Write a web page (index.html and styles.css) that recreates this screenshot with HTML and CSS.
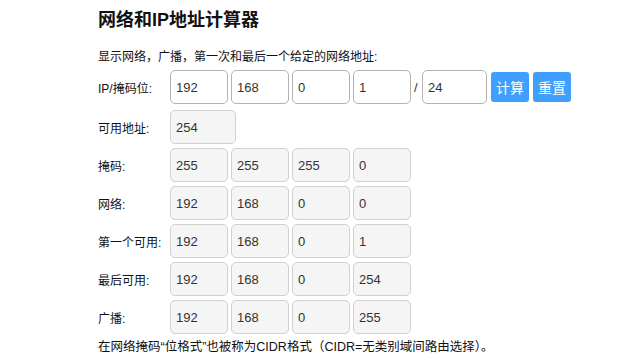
FILE: index.html
```html
<!DOCTYPE html>
<html lang="zh-CN">
<head>
  <meta charset="UTF-8" />
  <meta name="viewport" content="width=device-width, initial-scale=1.0"/>
  <title>网络和IP地址计算器</title>
  <link rel="stylesheet" href="styles.css">
</head>
<body>

  <div class="calc">
    <h2>网络和IP地址计算器</h2>
    <p class="desc">显示网络，广播，第一次和最后一个给定的网络地址:</p>

    <div class="row first">
      <label>IP/掩码位:</label>
      <input type="text" class="oct" value="192" />
      <input type="text" class="oct" value="168" />
      <input type="text" class="oct" value="0" />
      <input type="text" class="oct" value="1" />
      <span class="slash">/</span>
      <input type="text" class="bits" value="24" />
      <button type="button" class="btn">计算</button>
      <button type="button" class="btn">重置</button>
    </div>

    <div class="row result">
      <label>可用地址:</label>
      <input type="text" class="out wide" value="254" readonly />
    </div>

    <div class="row result">
      <label>掩码:</label>
      <input type="text" class="out" value="255" readonly />
      <input type="text" class="out" value="255" readonly />
      <input type="text" class="out" value="255" readonly />
      <input type="text" class="out" value="0" readonly />
    </div>

    <div class="row result">
      <label>网络:</label>
      <input type="text" class="out" value="192" readonly />
      <input type="text" class="out" value="168" readonly />
      <input type="text" class="out" value="0" readonly />
      <input type="text" class="out" value="0" readonly />
    </div>

    <div class="row result">
      <label>第一个可用:</label>
      <input type="text" class="out" value="192" readonly />
      <input type="text" class="out" value="168" readonly />
      <input type="text" class="out" value="0" readonly />
      <input type="text" class="out" value="1" readonly />
    </div>

    <div class="row result">
      <label>最后可用:</label>
      <input type="text" class="out" value="192" readonly />
      <input type="text" class="out" value="168" readonly />
      <input type="text" class="out" value="0" readonly />
      <input type="text" class="out" value="254" readonly />
    </div>

    <div class="row result">
      <label>广播:</label>
      <input type="text" class="out" value="192" readonly />
      <input type="text" class="out" value="168" readonly />
      <input type="text" class="out" value="0" readonly />
      <input type="text" class="out" value="255" readonly />
    </div>

    <p class="note">在网络掩码“位格式”也被称为CIDR格式（CIDR=无类别域间路由选择）。</p>
  </div>

</body>
</html>
```

FILE: styles.css
```css
body {
  margin: 0;
  background: #fff;
  color: #111;
  font-family: "Liberation Sans", Arial, "Noto Sans CJK SC", sans-serif;
  font-size: 12px;
}
.calc {
  padding: 8px 0 0 98px;
}
h2 {
  margin: 0;
  font-size: 18px;
  line-height: 24px;
  font-weight: bold;
}
.desc {
  margin: 17px 0 0;
  line-height: 16px;
}
.row {
  display: flex;
  align-items: center;
  gap: 3px;
  height: 34px;
}
.row.first {
  margin-top: 5px;
}
.row.result {
  margin-top: 4px;
}
.row.first + .row.result {
  margin-top: 6px;
}
.row label {
  width: 69px;
  flex: none;
}
input {
  box-sizing: border-box;
  width: 58px;
  height: 34px;
  padding: 0 5px;
  margin: 0;
  border: 1px solid #b3b3b3;
  border-radius: 5px;
  background: #fff;
  color: #333;
  font-family: "Liberation Sans", Arial, sans-serif;
  font-size: 13px;
  outline: none;
}
input.out {
  background: #f5f5f5;
  border-color: #d0d0d0;
}
input.wide {
  width: 66px;
}
input.bits {
  width: 65px;
}
.slash {
  width: 5px;
  margin-left: 0;
  color: #333;
  font-size: 13px;
}
.btn {
  height: 30px;
  padding: 0 5px;
  margin-left: 1px;
  border: none;
  border-radius: 3px;
  background: #409eff;
  color: #fff;
  font-family: "Noto Sans CJK SC", sans-serif;
  font-size: 14px;
  cursor: pointer;
}
.note {
  margin: 5px 0 0;
  line-height: 16px;
  font-size: 12.5px;
}
```
